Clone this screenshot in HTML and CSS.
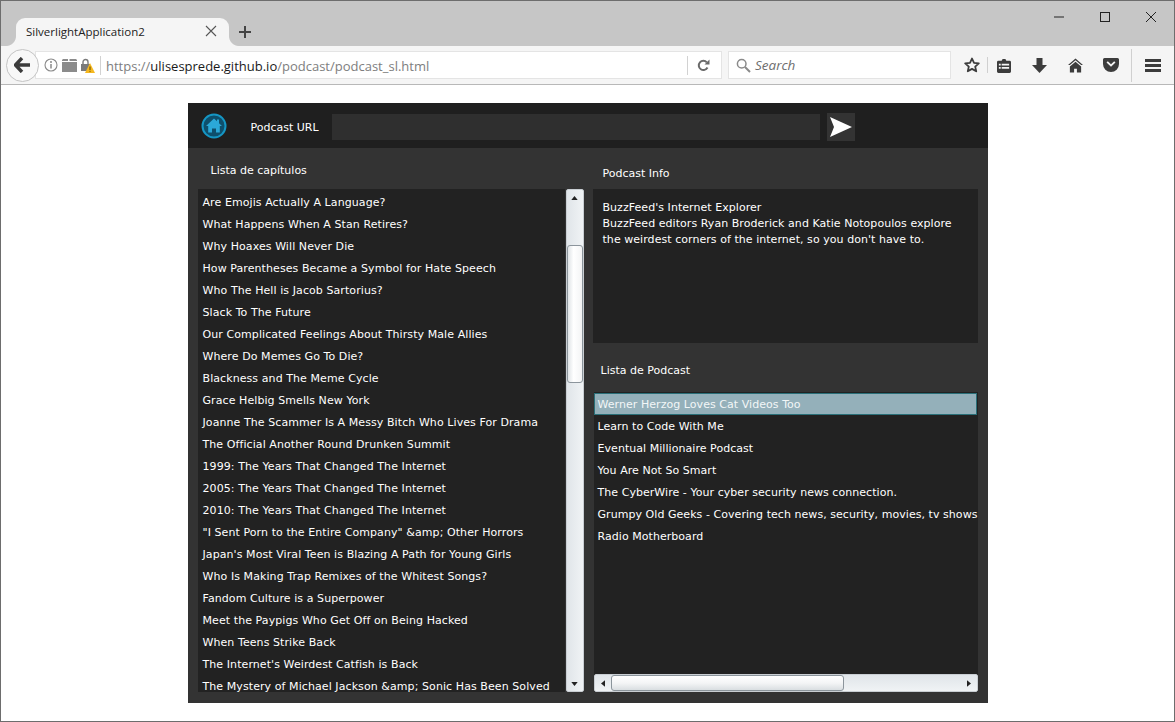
FILE: index.html
```html
<!DOCTYPE html>
<html lang="es">
<head>
<meta charset="utf-8">
<title>SilverlightApplication2</title>
<link rel="stylesheet" href="styles.css">
</head>
<body>
<div class="window">
  <div class="tabbar">
    <div class="tab">
      <span class="tab-title">SilverlightApplication2</span>
      <svg class="tab-close" width="12" height="12" viewBox="0 0 12 12"><path d="M1 1l10 10M11 1L1 11" stroke="#555" stroke-width="1.1" fill="none"/></svg>
    </div>
    <svg class="newtab" width="14" height="14" viewBox="0 0 14 14"><path d="M7 1v12M1 7h12" stroke="#444" stroke-width="2" fill="none"/></svg>
    <div class="caption">
      <svg width="12" height="12" viewBox="0 0 12 12"><path d="M1 6h10" stroke="#222" stroke-width="1" fill="none"/></svg>
      <svg width="12" height="12" viewBox="0 0 12 12"><rect x="1.500" y="1.500" width="9" height="9" stroke="#222" fill="none"/></svg>
      <svg width="12" height="12" viewBox="0 0 12 12"><path d="M1 1l10 10M11 1L1 11" stroke="#222" stroke-width="1" fill="none"/></svg>
    </div>
  </div>
  <div class="toolbar">
    <div class="back">
      <svg width="18" height="16" viewBox="0 0 18 16"><path d="M8 1L1.500 8 8 15M2 8h14" stroke="#3c3c3c" stroke-width="3.400" fill="none"/></svg>
    </div>
    <div class="urlbar">
      <svg class="i-info" width="14" height="14" viewBox="0 0 14 14"><circle cx="7" cy="7" r="6" fill="none" stroke="#8a8a8a" stroke-width="1.100"/><path d="M7 6v4.500" stroke="#8a8a8a" stroke-width="1.500"/><circle cx="7" cy="4" r="1" fill="#8a8a8a"/></svg>
      <svg class="i-folder" width="15" height="13" viewBox="0 0 15 13"><path d="M0 2h6V0H1L0 1zM7.500 2H15V1L14 0H7.500zM0 3h15v10H0z" fill="#8b8b8b"/></svg>
      <svg class="i-lock" width="15" height="15" viewBox="0 0 15 15"><path d="M1 6h9v7H1z" fill="#7a7a7a"/><path d="M3 6V4a2.500 2.500 0 0 1 5 0v2" stroke="#7a7a7a" stroke-width="1.400" fill="none"/><path d="M10 5l5 10H5z" fill="#f5b81f"/><path d="M10 8.500v3.500M10 12.800v1" stroke="#5a4300" stroke-width="1"/></svg>
      <span class="sep"></span>
      <span class="url"><span class="url-dim">https://</span><span class="url-host">ulisesprede.github.io</span><span class="url-dim">/podcast/podcast_sl.html</span></span>
      <span class="sep sep-reload"></span>
      <svg class="i-reload" width="13" height="13" viewBox="0 0 13 13"><path d="M10.500 8.500A4.600 4.600 0 1 1 9.800 3.300" stroke="#6a6a6a" stroke-width="2" fill="none"/><path d="M7.500 5.500h5v-5z" fill="#6a6a6a"/></svg>
    </div>
    <div class="searchbar">
      <svg width="15" height="15" viewBox="0 0 15 15"><circle cx="5.700" cy="5.700" r="4.300" stroke="#8a8a8a" stroke-width="1.500" fill="none"/><path d="M9 9l5 5" stroke="#8a8a8a" stroke-width="2"/></svg>
      <span>Search</span>
    </div>
    <div class="tools">
      <svg class="t-star" width="16" height="16" viewBox="0 0 16 16"><path d="M8 1.500l2 4.400 4.800.5-3.600 3.200 1 4.700L8 11.900l-4.200 2.400 1-4.700L1.200 6.400 6 5.900z" stroke="#3c3c3c" stroke-width="1.800" fill="none" stroke-linejoin="round"/></svg>
      <span class="t-sep"></span>
      <svg class="t-list" width="14" height="15" viewBox="0 0 15 16"><path fill-rule="evenodd" d="M1.500 3H5l1-2h3l1 2h3.500A1.500 1.500 0 0 1 15 4.500v10a1.500 1.500 0 0 1-1.500 1.500h-12A1.500 1.500 0 0 1 0 14.500v-10A1.500 1.500 0 0 1 1.500 3zM2 6v2h2V6zm3 0v2h8V6zM2 9.500v2h2v-2zm3 0v2h8v-2z" fill="#3c3c3c"/></svg>
      <svg class="t-down" width="15" height="15" viewBox="0 0 15 15"><path d="M4.500 0h6v7H15l-7.500 8L0 7h4.500z" fill="#3c3c3c"/></svg>
      <svg class="t-home" width="15" height="15" viewBox="0 0 16 15"><path d="M8 0l8 7h-2L8 2 2 7H0zM8 3.500L14 8.500V15H9.500v-4h-3v4H2V8.500z" fill="#3c3c3c"/></svg>
      <svg class="t-pocket" width="16" height="14" viewBox="0 0 16 14"><path fill-rule="evenodd" d="M1.500 0h13A1.500 1.500 0 0 1 16 1.500V6a8 8 0 0 1-16 0V1.500A1.500 1.500 0 0 1 1.500 0zM3.500 4.500L8 8.800l4.500-4.300-1.300-1.300L8 6.200 4.800 3.200z" fill="#3c3c3c"/></svg>
      <span class="t-sep t-sep-tall"></span>
      <svg class="t-menu" width="16" height="13" viewBox="0 0 16 13"><path d="M0 1.500h16M0 6.500h16M0 11.500h16" stroke="#3c3c3c" stroke-width="2.800"/></svg>
    </div>
  </div>
  <main class="page">
    <div class="app">
      <header class="app-head">
        <svg class="logo" width="26" height="26" viewBox="0 0 26 26"><circle cx="13" cy="13" r="11.500" fill="#0e4f6c" stroke="#1596c4" stroke-width="2"/><path d="M13 5.500l3 2.800V6.500h2v3.700l3 2.800h-2.200v6.500h-3.800v-4h-4v4H7.200V13H5z" fill="#2ba8d8"/></svg>
        <label class="url-label">Podcast URL</label>
        <div class="url-input"></div>
        <div class="send">
          <svg width="22" height="20" viewBox="0 0 22 20"><path d="M0 0l22 10L0 20l4-10z" fill="#fff"/></svg>
        </div>
      </header>
      <div class="app-body">
        <section class="col-left">
          <h2 class="title title-chapters">Lista de capítulos</h2>
          <div class="chapters">
            <ul class="rows rows-chapters">
              <li>Are Emojis Actually A Language?</li>
              <li>What Happens When A Stan Retires?</li>
              <li>Why Hoaxes Will Never Die</li>
              <li>How Parentheses Became a Symbol for Hate Speech</li>
              <li>Who The Hell is Jacob Sartorius?</li>
              <li>Slack To The Future</li>
              <li>Our Complicated Feelings About Thirsty Male Allies</li>
              <li>Where Do Memes Go To Die?</li>
              <li>Blackness and The Meme Cycle</li>
              <li>Grace Helbig Smells New York</li>
              <li>Joanne The Scammer Is A Messy Bitch Who Lives For Drama</li>
              <li>The Official Another Round Drunken Summit</li>
              <li>1999: The Years That Changed The Internet</li>
              <li>2005: The Years That Changed The Internet</li>
              <li>2010: The Years That Changed The Internet</li>
              <li>"I Sent Porn to the Entire Company" &amp;amp; Other Horrors</li>
              <li>Japan's Most Viral Teen is Blazing A Path for Young Girls</li>
              <li>Who Is Making Trap Remixes of the Whitest Songs?</li>
              <li>Fandom Culture is a Superpower</li>
              <li>Meet the Paypigs Who Get Off on Being Hacked</li>
              <li>When Teens Strike Back</li>
              <li>The Internet's Weirdest Catfish is Back</li>
              <li>The Mystery of Michael Jackson &amp;amp; Sonic Has Been Solved</li>
            </ul>
            <div class="vscroll">
              <svg class="arrow" width="7" height="4" viewBox="0 0 8 5"><path d="M4 0l4 5H0z" fill="#222"/></svg>
              <div class="vthumb"></div>
              <svg class="arrow" width="7" height="4" viewBox="0 0 8 5"><path d="M4 5L0 0h8z" fill="#222"/></svg>
            </div>
          </div>
        </section>
        <section class="col-right">
          <h2 class="title title-info">Podcast Info</h2>
          <div class="info">
            <p>BuzzFeed's Internet Explorer</p>
            <p>BuzzFeed editors Ryan Broderick and Katie Notopoulos explore<br>the weirdest corners of the internet, so you don't have to.</p>
          </div>
          <h2 class="title title-podcasts">Lista de Podcast</h2>
          <div class="podcasts">
            <ul class="rows rows-podcast">
              <li class="selected">Werner Herzog Loves Cat Videos Too</li>
              <li>Learn to Code With Me</li>
              <li>Eventual Millionaire Podcast</li>
              <li>You Are Not So Smart</li>
              <li>The CyberWire - Your cyber security news connection.</li>
              <li>Grumpy Old Geeks - Covering tech news, security, movies, tv shows</li>
              <li>Radio Motherboard</li>
            </ul>
            <div class="hscroll">
              <svg class="arrow" width="4" height="7" viewBox="0 0 5 8"><path d="M0 4l5-4v8z" fill="#222"/></svg>
              <div class="htrack"><div class="hthumb"></div></div>
              <svg class="arrow" width="4" height="7" viewBox="0 0 5 8"><path d="M5 4L0 0v8z" fill="#222"/></svg>
            </div>
          </div>
        </section>
      </div>
    </div>
  </main>
</div>
</body>
</html>
```
FILE: styles.css
```css
* { box-sizing: border-box; }
html, body { margin: 0; padding: 0; height: 100%; overflow: hidden; }
body { background: #fff; font-family: "DejaVu Sans", sans-serif; }
ul { list-style: none; margin: 0; padding: 0; }
h2, p { margin: 0; font-weight: normal; }

.window { width: 1175px; height: 722px; border: 1px solid #6d6d6d; display: flex; flex-direction: column; background: #fff; }

.tabbar { height: 45px; flex: none; background: #c6c6c6; display: flex; align-items: flex-end; position: relative; padding-left: 15px; }
.tab { width: 213px; height: 28px; background: #f5f5f5; border-radius: 9px 9px 0 0; display: flex; align-items: center; justify-content: space-between; padding: 0 12px 2px 10px; position: relative; }
.tab::before, .tab::after { content: ""; position: absolute; bottom: 0; width: 10px; height: 10px; }
.tab::before { left: -10px; background: radial-gradient(circle at 0 0, #c6c6c6 9.5px, #f5f5f5 10.5px); }
.tab::after { right: -10px; background: radial-gradient(circle at 100% 0, #c6c6c6 9.5px, #f5f5f5 10.5px); }
.tab-title { font: 11.5px "Open Sans", sans-serif; color: #222; }
.tab-close { flex: none; }
.newtab { margin: 0 0 7px 9px; flex: none; position: relative; }
.caption { position: absolute; top: 10px; right: 17px; display: flex; gap: 34px; }

.toolbar { height: 39px; flex: none; background: #f5f5f5; border-bottom: 1px solid #b8b8b8; display: flex; align-items: center; padding: 0 0 0 5px; }
.back { width: 33px; height: 33px; border-radius: 50%; border: 1px solid #c4c4c4; background: #f8f8f8; display: flex; align-items: center; justify-content: center; flex: none; position: relative; z-index: 1; }
.urlbar { width: 687px; height: 28px; margin-left: -4px; background: #fff; border: 1px solid #e4e4e4; display: flex; align-items: center; padding-left: 8px; flex: none; }
.i-info { flex: none; }
.i-folder { flex: none; margin-left: 4px; }
.i-lock { flex: none; margin-left: 3px; }
.sep { width: 1px; height: 19px; background: #d2d2d2; flex: none; margin-left: 5px; }
.url { font: 13px "Open Sans", sans-serif; margin-left: 5px; padding-top: 2px; width: 581px; flex: none; white-space: nowrap; }
.url-dim { color: #7e7e7e; }
.url-host { color: #1a1a1a; }
.sep-reload { margin-left: 0; }
.i-reload { margin-left: 9px; flex: none; }
.searchbar { width: 223px; height: 28px; margin-left: 6px; background: #fff; border: 1px solid #e4e4e4; display: flex; align-items: center; padding-left: 7px; gap: 4px; flex: none; }
.searchbar span { font: italic 13.5px "Open Sans", sans-serif; color: #6e6e6e; }
.tools { display: flex; align-items: center; flex: 1; padding-left: 13px; }
.t-star { flex: none; }
.t-sep { width: 1px; height: 16px; background: #d0d0d0; margin-left: 7px; flex: none; }
.t-list { margin-left: 9px; flex: none; }
.t-down { margin-left: 21px; flex: none; }
.t-home { margin-left: 21px; flex: none; }
.t-pocket { margin-left: 20px; flex: none; }
.t-sep-tall { height: 33px; margin-left: 12px; }
.t-menu { margin-left: 13px; flex: none; }

.page { flex: 1; background: #fff; display: flex; justify-content: center; padding-top: 18px; }
.app { width: 800px; height: 600px; background: #333; color: #fff; font-size: 11px; display: flex; flex-direction: column; }

.app-head { height: 45px; flex: none; background: #1f1f1f; display: flex; align-items: center; padding-left: 13px; }
.logo { flex: none; }
.url-label { margin: 3px 0 0 24px; width: 81px; flex: none; }
.url-input { width: 488px; height: 26px; background: #2f2f2f; flex: none; margin-top: 3px; }
.send { width: 28px; height: 28px; margin: 3px 0 0 7px; background: #333; display: flex; align-items: center; justify-content: center; flex: none; }

.app-body { flex: 1; display: flex; padding: 0 10px; min-height: 0; }
.title { font-size: 11px; line-height: 14px; }

.col-left { width: 386px; flex: none; display: flex; flex-direction: column; }
.title-chapters { padding: 16px 0 11px 13px; }
.chapters { width: 386px; height: 503px; display: flex; }
.rows { flex: 1; min-width: 0; background: #222; overflow: hidden; padding-top: 3px; letter-spacing: 0.05px; }
.rows li { height: 22px; line-height: 22px; padding-left: 5px; white-space: nowrap; overflow: hidden; }
.rows-chapters { letter-spacing: 0.08px; }
.vscroll { width: 18px; flex: none; margin-left: 1px; background: linear-gradient(90deg, #e0e5e9, #f0f3f5); border: 1px solid #c9ced3; border-radius: 2px; display: flex; flex-direction: column; align-items: center; padding-top: 6px; }
.vthumb { width: 16px; height: 138px; margin-top: 45px; border: 1px solid #8c959c; border-radius: 3px; background: linear-gradient(90deg, #dfe3e6, #fff 40%, #f3f4f5); }
.vscroll .arrow:last-child { margin-top: auto; margin-bottom: 5px; }

.col-right { flex: 1; min-width: 0; margin-left: 9px; display: flex; flex-direction: column; }
.title-info { padding: 19px 0 8px 10px; }
.info { height: 154px; background: #222; padding: 11px 10px 0; line-height: 16px; flex: none; letter-spacing: 0.05px; }
.title-podcasts { padding: 21px 0 14px 8px; }
.podcasts { width: 384px; height: 300px; margin-left: 1px; display: flex; flex-direction: column; background: #222; }
.rows-podcast { padding-top: 1px; background: #222; }
.rows-podcast li { padding-left: 4px; line-height: 24px; }
.rows-podcast li.selected { background: #94b0ba; border: 1px solid #2a6f78; line-height: 22px; margin-right: 1px; padding-left: 3px; color: #f2f6f7; }
.hscroll { height: 18px; flex: none; background: linear-gradient(180deg, #e0e5e9, #f0f3f5); border: 1px solid #c9ced3; border-radius: 2px; display: flex; align-items: center; padding: 0 6px; }
.htrack { flex: 1; height: 16px; padding-left: 6px; }
.hthumb { width: 233px; height: 16px; border: 1px solid #8c959c; border-radius: 3px; background: linear-gradient(180deg, #fff, #f4f5f6 50%, #d9dee1); }
```
